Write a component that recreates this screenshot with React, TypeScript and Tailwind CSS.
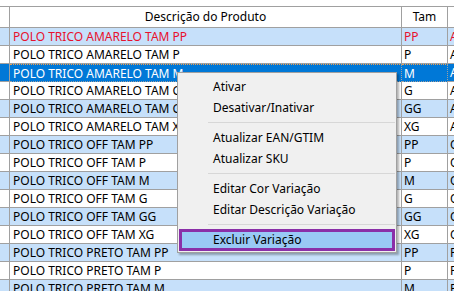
import React from "react";

interface Row {
  desc: string;
  tam: string;
  cor: string;
}

const rows: Row[] = [
  { desc: "POLO TRICO AMARELO TAM PP", tam: "PP", cor: "A" },
  { desc: "POLO TRICO AMARELO TAM P", tam: "P", cor: "A" },
  { desc: "POLO TRICO AMARELO TAM M", tam: "M", cor: "A" },
  { desc: "POLO TRICO AMARELO TAM G", tam: "G", cor: "A" },
  { desc: "POLO TRICO AMARELO TAM GG", tam: "GG", cor: "A" },
  { desc: "POLO TRICO AMARELO TAM XG", tam: "XG", cor: "A" },
  { desc: "POLO TRICO OFF TAM PP", tam: "PP", cor: "O" },
  { desc: "POLO TRICO OFF TAM P", tam: "P", cor: "O" },
  { desc: "POLO TRICO OFF TAM M", tam: "M", cor: "O" },
  { desc: "POLO TRICO OFF TAM G", tam: "G", cor: "O" },
  { desc: "POLO TRICO OFF TAM GG", tam: "GG", cor: "O" },
  { desc: "POLO TRICO OFF TAM XG", tam: "XG", cor: "O" },
  { desc: "POLO TRICO PRETO TAM PP", tam: "PP", cor: "P" },
  { desc: "POLO TRICO PRETO TAM P", tam: "P", cor: "P" },
  { desc: "POLO TRICO PRETO TAM M", tam: "M", cor: "P" },
];

const menu: (string | null)[] = [
  "Ativar",
  "Desativar/Inativar",
  null,
  "Atualizar EAN/GTIM",
  "Atualizar SKU",
  null,
  "Editar Cor Variação",
  "Editar Descrição Variação",
  null,
];

function GridRow({ row, index }: { row: Row; index: number }) {
  const selected = index === 2;
  const inactive = index === 0;
  const bg = selected ? "bg-[#0078d7]" : index % 2 === 0 ? "bg-[#c6e0fa]" : "bg-white";
  const text = selected ? "text-white" : inactive ? "text-[#e8112d]" : "text-black";
  const focus = selected ? "border-t border-dotted border-t-[#f0a050]" : "";

  return (
    <div className={`flex h-[18px] ${bg} ${text}`}>
      <div className="w-[10px] shrink-0 border-r border-b border-[#a0a0a0]" />
      <div className={`w-[392px] shrink-0 border-r border-b border-[#a0a0a0] pl-[3px] leading-[17px] ${focus}`}>
        {row.desc}
      </div>
      <div className={`w-[46px] shrink-0 border-r border-b border-[#a0a0a0] pl-[2px] leading-[17px] ${focus}`}>
        {row.tam}
      </div>
      <div className="flex-1 overflow-hidden whitespace-nowrap border-b border-[#a0a0a0] pl-[2px] leading-[17px]">
        {row.cor}
      </div>
    </div>
  );
}

export default function App() {
  return (
    <div
      className="relative w-[454px] h-[291px] overflow-hidden bg-white pt-[6px] text-[12px]"
      style={{ fontFamily: '"Noto Sans", "Open Sans", sans-serif' }}
    >
      {/* header */}
      <div className="flex h-[22px] border-t border-b border-[#a0a0a0] text-black">
        <div className="w-[10px] shrink-0 border-r border-[#a0a0a0]" />
        <div className="w-[392px] shrink-0 border-r border-[#a0a0a0] text-center leading-[20px]">
          Descrição do Produto
        </div>
        <div className="w-[46px] shrink-0 border-r border-[#a0a0a0] text-center leading-[20px]">
          Tam
        </div>
        <div className="flex-1" />
      </div>

      {rows.map((r, i) => (
        <GridRow key={i} row={r} index={i} />
      ))}

      {/* context menu */}
      <div className="absolute left-[177px] top-[72px] w-[220px] border border-[#a0a0a0] bg-[#f0f0f0] px-px pt-[3px] pb-px text-black shadow-[2px_2px_2px_rgba(0,0,0,0.3)]">
        {menu.map((m, i) =>
          m === null ? (
            <div key={i} className="flex h-[9px] items-center pl-[29px]">
              <div className="h-px w-full bg-[#d7d7d7]" />
            </div>
          ) : (
            <div key={i} className="h-[21px] pl-[34px] leading-[21px]">
              {m}
            </div>
          )
        )}
        <div className="h-[22px] border-[3px] border-[#8a2fa8] bg-[#99c9f5] pl-[31px] leading-[16px]">
          Excluir Variação
        </div>
      </div>
    </div>
  );
}
